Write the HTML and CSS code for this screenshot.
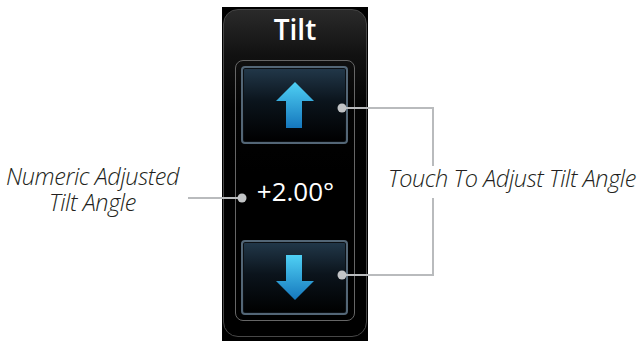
FILE: index.html
```html
<!DOCTYPE html>
<html lang="en">
<head>
    <meta charset="UTF-8">
    <title>Tilt Control</title>
    <link rel="stylesheet" href="styles.css">
</head>
<body>
    <div class="stage">
        <div class="note note-left">
            <div>Numeric Adjusted</div>
            <div>Tilt Angle</div>
        </div>
        <div class="panel-bg">
            <div class="panel">
                <div class="title">Tilt</div>
                <div class="frame">
                    <div class="btn btn-up">
                        <svg width="40" height="48" viewBox="0 0 40 48">
                            <defs>
                                <linearGradient id="gUp" x1="0" y1="0" x2="0" y2="1">
                                    <stop offset="0" stop-color="#4fd0f4"/>
                                    <stop offset="1" stop-color="#1577bd"/>
                                </linearGradient>
                            </defs>
                            <path d="M20 0 L39 19 L27 19 L27 46 L11 46 L11 19 L1 19 Z" fill="url(#gUp)"/>
                        </svg>
                    </div>
                    <div class="value">+2.00°</div>
                    <div class="btn btn-down">
                        <svg width="40" height="46" viewBox="0 0 40 46">
                            <defs>
                                <linearGradient id="gDown" x1="0" y1="0" x2="0" y2="1">
                                    <stop offset="0" stop-color="#4fd0f4"/>
                                    <stop offset="1" stop-color="#1577bd"/>
                                </linearGradient>
                            </defs>
                            <path d="M11 0 L27 0 L27 26 L39 26 L20 45 L1 26 L11 26 Z" fill="url(#gDown)"/>
                        </svg>
                    </div>
                </div>
            </div>
        </div>
        <div class="note note-right">Touch To Adjust Tilt Angle</div>

        <!-- leader lines drawn over the picture -->
        <svg class="leaders" width="640" height="341" viewBox="0 0 640 341">
            <g stroke="#b9bbbd" stroke-width="2" fill="none">
                <line x1="188" y1="198" x2="242" y2="198"/>
                <polyline points="342,108 433,108 433,166"/>
                <polyline points="433,198 433,275 342,275"/>
            </g>
            <g fill="#c2c4c6">
                <circle cx="242" cy="198" r="4.5"/>
                <circle cx="342" cy="108" r="4.5"/>
                <circle cx="342" cy="275" r="4.5"/>
            </g>
        </svg>
    </div>
</body>
</html>
```

FILE: styles.css
```css
body {
    margin: 0;
    background: #fff;
    font-family: 'Open Sans', Arial, sans-serif;
}
.stage {
    position: relative;
    width: 640px;
    height: 341px;
    display: grid;
    grid-template-columns: 222px 146px 1fr;
    overflow: hidden;
}
.note {
    font-style: italic;
    font-weight: 300;
    font-size: 23.5px;
    color: #231f20;
    letter-spacing: -0.4px;
    white-space: nowrap;
}
.note-left {
    padding-right: 37px;
    padding-top: 163px;
    text-align: center;
    line-height: 26px;
}
.note-right {
    padding-left: 20px;
    padding-top: 162px;
    line-height: 32px;
}
.panel-bg {
    margin-top: 7px;
    background: #000;
    padding: 2px 1px 0 1px;
}
.panel {
    height: 326px;
    border: 1px solid #474747;
    border-radius: 15px;
    background: linear-gradient(180deg, #2a2a2a 0%, #111 14%, #030303 30%, #000 50%);
    padding: 0 11px;
}
.title {
    height: 50px;
    color: #fff;
    font-weight: 600;
    font-size: 28px;
    text-align: center;
    line-height: 38px;
}
.frame {
    height: 249px;
    border: 1px solid #666;
    border-radius: 8px;
    padding: 5px 6px 5px 5px;
    display: flex;
    flex-direction: column;
}
.btn {
    border: 2px solid #536676;
    border-radius: 4px;
    background: linear-gradient(180deg, #22384a 0%, #0b141c 45%, #000 100%);
    display: flex;
    justify-content: center;
    box-shadow: inset 0 0 0 1px #0b0f13;
}
.btn-up {
    height: 74px;
    align-items: flex-start;
}
.btn-up svg {
    margin-top: 14px;
}
.btn-down {
    height: 71px;
}
.btn-down svg {
    margin-top: 13px;
}
.value {
    flex: 1;
    color: #fff;
    font-size: 26px;
    text-align: center;
    line-height: 94px;
    padding-left: 2px;
}
.leaders {
    position: absolute;
    left: 0;
    top: 0;
}
```
